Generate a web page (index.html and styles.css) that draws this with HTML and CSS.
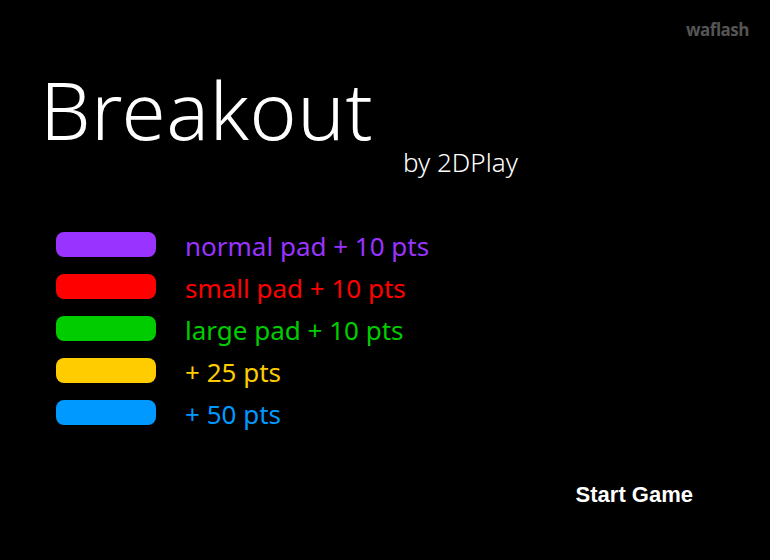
FILE: index.html
```html
<!DOCTYPE html>
<html>
<head>
<meta charset="utf-8">
<link rel="stylesheet" href="styles.css">
</head>
<body>
<div class="stage">
  <div class="topbar"><span class="logo">waflash</span></div>
  <div class="title-block">
    <h1 class="title">Breakout</h1>
    <div class="byline">by 2DPlay</div>
  </div>
  <ul class="legend">
    <li class="row purple"><span class="pad"></span><span class="label">normal pad + 10 pts</span></li>
    <li class="row red"><span class="pad"></span><span class="label">small pad + 10 pts</span></li>
    <li class="row green"><span class="pad"></span><span class="label">large pad + 10 pts</span></li>
    <li class="row yellow"><span class="pad"></span><span class="label">+ 25 pts</span></li>
    <li class="row blue"><span class="pad"></span><span class="label">+ 50 pts</span></li>
  </ul>
  <div class="footer"><span class="start">Start Game</span></div>
</div>
</body>
</html>
```
FILE: styles.css
```css
html, body {
  margin: 0;
  padding: 0;
  background: #000;
}
.stage {
  width: 770px;
  height: 560px;
  background: #000;
  display: flex;
  flex-direction: column;
  font-family: "Noto Sans", "Open Sans", sans-serif;
  color: #fff;
  overflow: hidden;
}
.topbar {
  display: flex;
  justify-content: flex-end;
  padding: 18px 21px 0 0;
  height: 24px;
}
.logo {
  font-family: "Open Sans", "Noto Sans", sans-serif;
  font-weight: 700;
  font-size: 17px;
  line-height: 24px;
  color: #555;
  letter-spacing: -0.5px;
}
.title-block {
  padding-left: 40px;
  margin-top: 27px;
}
.title {
  margin: 0;
  font-weight: 300;
  font-size: 80px;
  line-height: 80px;
  letter-spacing: 0.5px;
}
.byline {
  margin: -2px 0 0 363px;
  font-size: 26px;
  line-height: 30px;
  font-weight: 300;
}
.legend {
  list-style: none;
  margin: 55px 0 0 56px;
  padding: 0;
  display: flex;
  flex-direction: column;
  gap: 17px;
}
.row {
  display: flex;
  align-items: center;
  height: 25px;
  gap: 29px;
}
.pad {
  width: 100px;
  height: 25px;
  border-radius: 8px;
  flex: none;
}
.label {
  font-size: 26px;
  line-height: 25px;
  font-weight: 400;
  padding-top: 3px;
}
.purple .pad { background: #9933ff; }
.purple .label { color: #9933ff; }
.red .pad { background: #ff0000; }
.red .label { color: #ff0000; }
.green .pad { background: #00cc00; }
.green .label { color: #00cc00; }
.yellow .pad { background: #ffcc00; }
.yellow .label { color: #ffcc00; }
.blue .pad { background: #0099ff; }
.blue .label { color: #0099ff; }
.footer {
  display: flex;
  justify-content: flex-end;
  padding-right: 77px;
  margin-top: 58px;
}
.start {
  font-family: "Liberation Sans", Arial, sans-serif;
  font-weight: 700;
  font-size: 22px;
  line-height: 24px;
}
```
